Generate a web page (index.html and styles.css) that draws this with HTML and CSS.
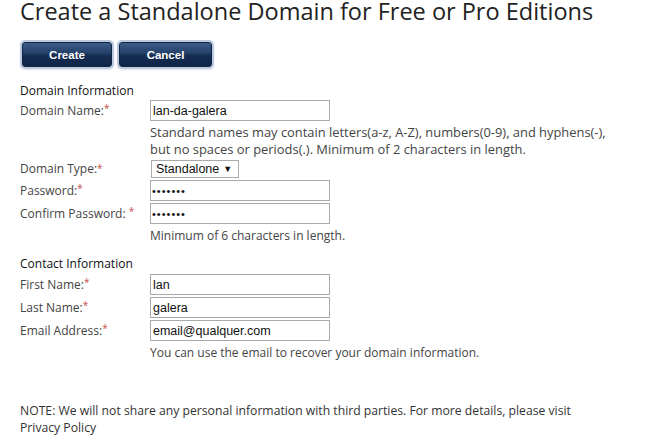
FILE: index.html
```html
<!DOCTYPE html>
<html>
<head>
<meta charset="utf-8">
<link rel="stylesheet" href="styles.css">
</head>
<body>
<div class="page">
  <h1 class="title">Create a Standalone Domain for Free or Pro Editions</h1>
  <div class="actions">
    <button class="btn btn-create">Create</button>
    <button class="btn btn-cancel">Cancel</button>
  </div>

  <h2 class="section">Domain Information</h2>
  <div class="form">
    <label class="label">Domain Name:<span class="req">*</span></label>
    <div class="field"><input class="input" type="text" value="lan-da-galera"></div>
    <div class="help help-wide span2">Standard names may contain letters(a-z, A-Z), numbers(0-9), and hyphens(-),<br>but no spaces or periods(.). Minimum of 2 characters in length.</div>

    <label class="label label-short">Domain Type:<span class="req">*</span></label>
    <div class="field field-short"><span class="select">Standalone <span class="arrow">▼</span></span></div>

    <label class="label">Password:<span class="req">*</span></label>
    <div class="field"><input class="input pw" type="text" value="•••••••"></div>

    <label class="label">Confirm Password: <span class="req">*</span></label>
    <div class="field"><input class="input pw" type="text" value="•••••••"></div>
    <div class="help span2">Minimum of 6 characters in length.</div>
  </div>

  <h2 class="section section-contact">Contact Information</h2>
  <div class="form">
    <label class="label">First Name:<span class="req">*</span></label>
    <div class="field"><input class="input" type="text" value="lan"></div>

    <label class="label">Last Name:<span class="req">*</span></label>
    <div class="field"><input class="input" type="text" value="galera"></div>

    <label class="label">Email Address:<span class="req">*</span></label>
    <div class="field"><input class="input" type="text" value="email@qualquer.com"></div>
    <div class="help span2">You can use the email to recover your domain information.</div>
  </div>

  <p class="note">NOTE: We will not share any personal information with third parties. For more details, please visit<br>Privacy Policy</p>
</div>
</body>
</html>
```

FILE: styles.css
```css
html, body {
  margin: 0;
  padding: 0;
  background: #ffffff;
}
body {
  font-family: "Open Sans", "Noto Sans", sans-serif;
  color: #333333;
  font-size: 12px;
}
.page {
  padding: 0 0 0 20px;
}
.title {
  margin: 0;
  font-size: 23.5px;
  font-weight: 400;
  line-height: 23px;
  color: #222222;
}
.actions {
  display: flex;
  gap: 6px;
  margin-top: 19px;
  margin-left: 1px;
}
.btn {
  height: 25px;
  border: 1px solid #102540;
  border-radius: 3px;
  background: linear-gradient(#3d5c85 0%, #22406a 45%, #152d50 55%, #10244a 100%);
  box-shadow: 0 0 0 2px #bccbe2, 0 1px 2px 2px #dde4ef;
  color: #ffffff;
  font-family: "Liberation Sans", Arial, sans-serif;
  font-weight: bold;
  font-size: 11.5px;
  padding: 0;
  margin: 0 0 0 1px;
}
.btn-create { width: 90px; }
.btn-cancel { width: 93px; }
.section {
  margin: 15px 0 0 0;
  font-size: 12px;
  font-weight: 400;
  line-height: 18px;
  color: #111111;
}
.section-contact {
  margin-top: 11px;
}
.form {
  display: grid;
  grid-template-columns: 130px auto;
  row-gap: 2px;
  margin-top: 0;
}
.section-contact + .form {
  margin-top: 1px;
}
.label {
  line-height: 21px;
  color: #444444;
  white-space: nowrap;
}
.label-short {
  line-height: 18px;
}
.req {
  color: #c8504a;
  font-size: 10px;
  vertical-align: top;
  line-height: 16px;
}
.field {
  display: flex;
  align-items: center;
}
.field-short {
  align-items: flex-start;
}
.input {
  box-sizing: border-box;
  width: 180px;
  height: 21px;
  border: 1px solid #a9a9a9;
  padding: 0 2px;
  margin: 0;
  font-family: "Liberation Sans", Arial, sans-serif;
  font-size: 12.5px;
  color: #111111;
  outline: none;
}
.pw {
  font-size: 11px;
  letter-spacing: 1px;
  padding-left: 1px;
}
.select {
  box-sizing: border-box;
  display: inline-flex;
  align-items: center;
  height: 18px;
  width: 88px;
  margin-left: 1px;
  border: 1px solid #a9a9a9;
  padding: 0 4px;
  font-family: "Liberation Sans", Arial, sans-serif;
  font-size: 12.5px;
  color: #111111;
}
.arrow {
  font-size: 9px;
  margin-left: 4px;
}
.span2 {
  grid-column: 2;
}
.help {
  line-height: 17px;
  color: #444444;
  padding-top: 1px;
}
.help-wide {
  font-size: 12.9px;
}
.note {
  margin: 41px 0 0 0;
  line-height: 17px;
  color: #333333;
  font-size: 12.2px;
}
```
